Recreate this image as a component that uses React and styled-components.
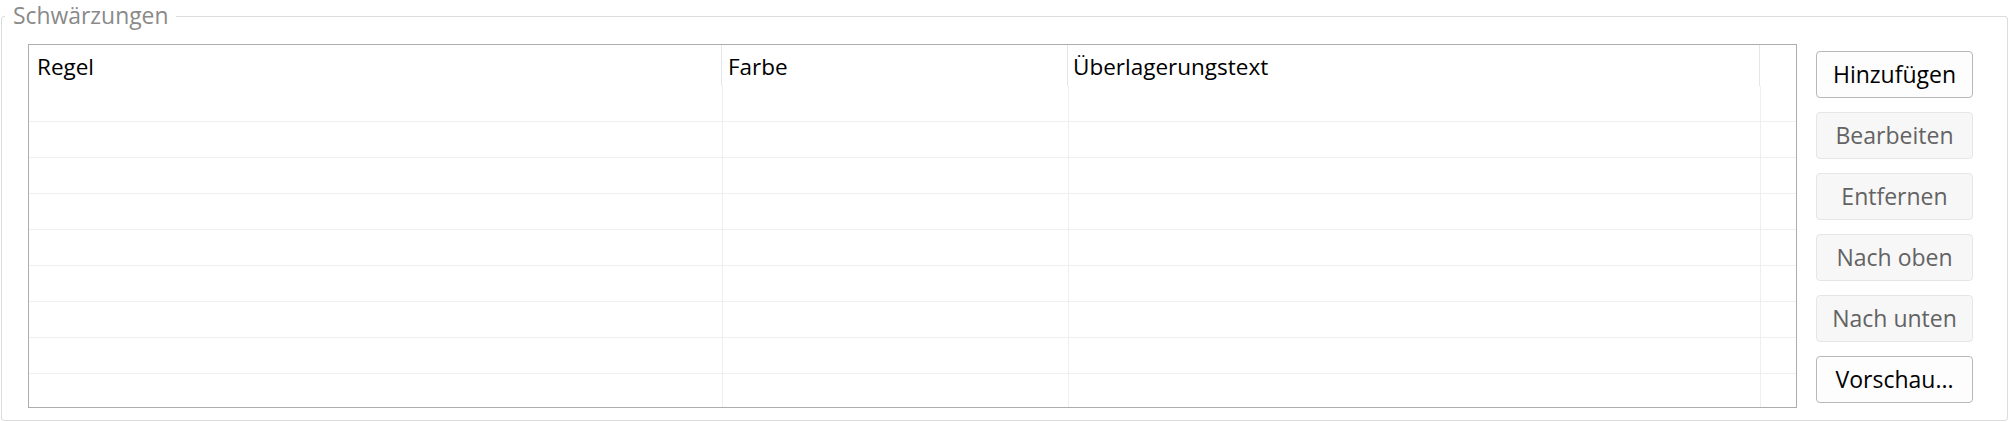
import React from "react";
import styled, { createGlobalStyle } from "styled-components";

const GlobalStyle = createGlobalStyle`
  html, body {
    margin: 0;
    padding: 0;
    background: #ffffff;
  }
  body {
    font-family: "Open Sans", "Noto Sans", "Liberation Sans", sans-serif;
    overflow: hidden;
  }
  * {
    box-sizing: border-box;
  }
`;

const columns = [
  { key: "rule", title: "Regel", width: 694, pad: 8 },
  { key: "color", title: "Farbe", width: 346, pad: 6 },
  { key: "text", title: "Überlagerungstext", width: 692, pad: 5 },
  { key: "filler", title: "", width: null, pad: 0 },
];

const buttons = [
  { label: "Hinzufügen", enabled: true },
  { label: "Bearbeiten", enabled: false },
  { label: "Entfernen", enabled: false },
  { label: "Nach oben", enabled: false },
  { label: "Nach unten", enabled: false },
  { label: "Vorschau...", enabled: true },
];

// header separators sit one pixel left of the body grid lines
const template = (shift) =>
  columns
    .map((c, i) => (c.width ? `${c.width - (i === 0 ? shift : 0)}px` : "1fr"))
    .join(" ");

const Group = styled.section`
  position: relative;
  margin: 16px 1px 1px 1px;
  height: 405px;
  border: 1px solid #dcdcdc;
  border-radius: 3px;
  display: flex;
  align-items: flex-start;
  padding: 27px 34px 0 26px;
  gap: 19px;
`;

const Legend = styled.span`
  position: absolute;
  top: -17px;
  left: 3px;
  padding: 0 7px 0 8px;
  background: #ffffff;
  color: #8a8a8a;
  font-size: 22.9px;
  line-height: 32px;
  white-space: nowrap;
`;

const Table = styled.div`
  flex: 1;
  height: 364px;
  border: 1px solid #adadad;
  overflow: hidden;
  display: flex;
  flex-direction: column;
`;

const HeaderRow = styled.div`
  display: grid;
  grid-template-columns: ${template(1)};
  height: 41px;
  flex: none;
`;

const HeaderCell = styled.div`
  padding-left: ${(p) => p.$pad}px;
  padding-top: 7px;
  font-size: 22.5px;
  line-height: 30px;
  color: #000000;
  white-space: nowrap;
  border-right: ${(p) => (p.$last ? "none" : "1px solid #e6e6e6")};
`;

const Row = styled.div`
  display: grid;
  grid-template-columns: ${template(0)};
  height: 36px;
  flex: none;
  border-bottom: 1px solid #efefef;
`;

const Cell = styled.div`
  border-right: ${(p) => (p.$last ? "none" : "1px solid #efefef")};
`;

const ButtonColumn = styled.div`
  display: flex;
  flex-direction: column;
  gap: 14px;
  margin-top: 7px;
  width: 157px;
  flex: none;
`;

const Button = styled.button`
  height: 47px;
  width: 100%;
  border-radius: 4px;
  font-family: inherit;
  font-size: 23px;
  padding: 0 0 1px 0;
  white-space: nowrap;
  cursor: ${(p) => (p.disabled ? "default" : "pointer")};
  background: ${(p) => (p.disabled ? "#f7f7f7" : "#fdfdfd")};
  border: 1px solid ${(p) => (p.disabled ? "#e6e6e6" : "#b8b8b8")};
  color: ${(p) => (p.disabled ? "#636363" : "#000000")};
`;

export default function App() {
  const rows = Array.from({ length: 10 }, (_, i) => i);

  return (
    <>
      <GlobalStyle />
      <Group>
        <Legend>Schwärzungen</Legend>
        <Table>
          <HeaderRow>
            {columns.map((c, i) => (
              <HeaderCell key={c.key} $pad={c.pad} $last={i === columns.length - 1}>
                {c.title}
              </HeaderCell>
            ))}
          </HeaderRow>
          {rows.map((r) => (
            <Row key={r}>
              {columns.map((c, i) => (
                <Cell key={c.key} $last={i === columns.length - 1} />
              ))}
            </Row>
          ))}
        </Table>
        <ButtonColumn>
          {buttons.map((b) => (
            <Button key={b.label} disabled={!b.enabled}>
              {b.label}
            </Button>
          ))}
        </ButtonColumn>
      </Group>
    </>
  );
}
